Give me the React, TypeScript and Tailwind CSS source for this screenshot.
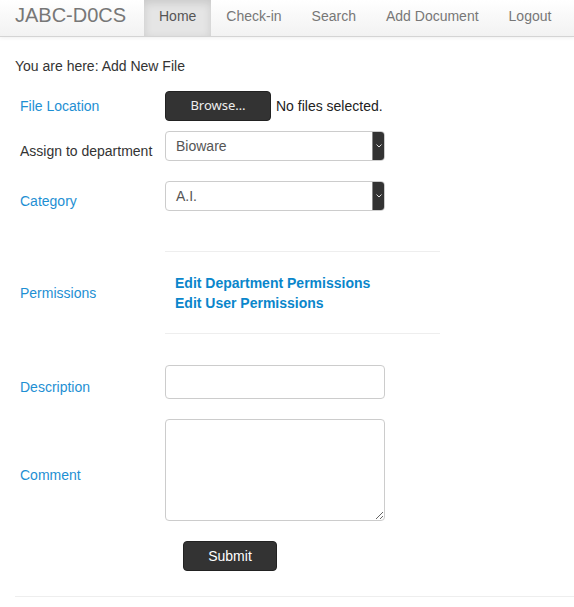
import React from "react";

const font = { fontFamily: '"Liberation Sans", Arial, sans-serif' };

function FakeSelect({ value }: { value: string }) {
  return (
    <div className="flex h-[30px] w-[220px] items-stretch rounded-[4px] border border-[#cccccc] bg-white">
      <div className="flex flex-1 items-center pl-[10px] text-[14px] text-[#555555]">{value}</div>
      <div className="flex w-[12px] items-center justify-center rounded-r-[3px] bg-[#333333] border-l border-[#888]">
        <svg width="6" height="4" viewBox="0 0 6 4">
          <path d="M0.5 0.5 L3 3 L5.5 0.5" fill="none" stroke="#dddddd" strokeWidth="1" />
        </svg>
      </div>
    </div>
  );
}

export default function App() {
  const label = "w-[150px] shrink-0 pl-[5px] text-[14px] leading-5 text-[#1e8fd3]";
  return (
    <div style={font} className="min-h-[607px] w-full bg-white text-[14px] text-[#333333]">
      <div className="flex h-[37px] border-b border-[#d4d4d4] bg-gradient-to-b from-white to-[#f2f2f2] shadow-[0_1px_4px_rgba(0,0,0,0.065)]">
        <div className="w-[144px] shrink-0 pl-[15px] pt-[3px] text-[20px] leading-6 text-[#777777]">JABC-D0CS</div>
        <nav className="flex h-[36px] text-[14px] leading-5">
          <div className="h-full bg-[#e5e5e5] px-[15px] pt-[6px] text-[#555555] shadow-[inset_0_3px_8px_rgba(0,0,0,0.125)]">Home</div>
          <div className="px-[15px] pt-[6px] text-[#777777]">Check-in</div>
          <div className="px-[15px] pt-[6px] text-[#777777]">Search</div>
          <div className="px-[15px] pt-[6px] text-[#777777]">Add Document</div>
          <div className="px-[15px] pt-[6px] text-[#777777]">Logout</div>
        </nav>
      </div>

      <div className="pl-[15px]">
        <div className="mt-[19px] leading-5 text-[#333333]">You are here: Add New File</div>

        <div className="mt-[15px] flex h-[30px] items-center">
          <div className={label}>File Location</div>
          <div
            style={{ fontFamily: '"Noto Sans", "DejaVu Sans", sans-serif' }}
            className="flex h-[30px] w-[106px] items-center justify-center rounded-[4px] border border-[#222222] bg-[#333333] text-[13px] text-[#eeeeee]"
          >
            Browse…
          </div>
          <span className="ml-[5px] text-[14px] text-[#222222]">No files selected.</span>
        </div>

        <div className="mt-[10px] flex items-start">
          <div className="w-[150px] shrink-0 pl-[5px] pt-[10px] text-[14px] leading-5 text-[#333333]">Assign to department</div>
          <FakeSelect value="Bioware" />
        </div>

        <div className="mt-[20px] flex items-start">
          <div className={label + " pt-[10px]"}>Category</div>
          <FakeSelect value="A.I." />
        </div>

        <div className="mt-[40px] flex items-center">
          <div className={label}>Permissions</div>
          <div className="w-[275px] border-t border-b border-[#eeeeee] pb-[20px] pl-[10px] pt-[21px] text-[14px] font-bold leading-5 text-[#0a86cb]">
            <div>Edit Department Permissions</div>
            <div>Edit User Permissions</div>
          </div>
        </div>

        <div className="mt-[31px] flex items-start">
          <div className={label + " pt-[12px]"}>Description</div>
          <input className="h-[34px] w-[220px] rounded-[4px] border border-[#cccccc] bg-white outline-none" />
        </div>

        <div className="mt-[20px] flex items-start">
          <div className={label + " pt-[46px]"}>Comment</div>
          <textarea className="block h-[102px] w-[220px] rounded-[4px] border border-[#cccccc] bg-white outline-none" />
        </div>

        <div className="mt-[20px] ml-[168px] flex h-[30px] w-[94px] items-center justify-center rounded-[4px] border border-[#222222] bg-[#333333] text-[14px] text-white">
          Submit
        </div>

        <div className="mt-[25px] border-t border-[#eeeeee]" />
      </div>
    </div>
  );
}
